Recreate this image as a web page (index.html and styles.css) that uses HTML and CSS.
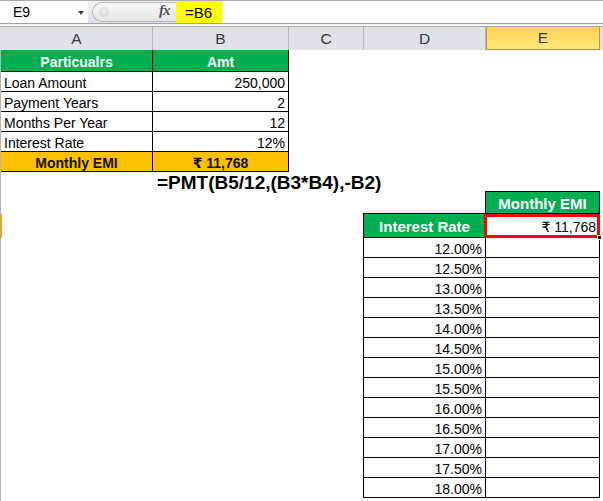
FILE: index.html
```html
<!DOCTYPE html>
<html>
<head>
<meta charset="utf-8">
<link rel="stylesheet" href="styles.css">
</head>
<body>
<div class="fbar">
  <div class="namebox">E9<span class="arrow"></span></div>
  <div class="fxzone">
    <div class="pill"><span class="knob"></span></div>
    <span class="fx">fx</span>
  </div>
  <div class="input"><span class="hl">=B6</span></div>
</div>
<div class="band"></div>
<div class="colhdr">
  <div class="h">A</div><div class="h">B</div><div class="h">C</div><div class="h">D</div><div class="h sel">E</div>
</div>
<div class="sheet">
  <span class="rowmark"></span>
  <div class="grid">
    <div class="c b green ctr">Particualrs</div><div class="c b green ctr">Amt</div><div class="c"></div><div class="c"></div><div class="c"></div>
    <div class="c b">Loan Amount</div><div class="c b r">250,000</div><div class="c"></div><div class="c"></div><div class="c"></div>
    <div class="c b">Payment Years</div><div class="c b r">2</div><div class="c"></div><div class="c"></div><div class="c"></div>
    <div class="c b">Months Per Year</div><div class="c b r">12</div><div class="c"></div><div class="c"></div><div class="c"></div>
    <div class="c b">Interest Rate</div><div class="c b r">12%</div><div class="c"></div><div class="c"></div><div class="c"></div>
    <div class="c b orange ctr">Monthly EMI</div><div class="c b orange ctr">₹ 11,768</div><div class="c"></div><div class="c"></div><div class="c"></div>
    <div class="c"></div><div class="c formula">=PMT(B5/12,(B3*B4),-B2)</div><div class="c"></div><div class="c"></div><div class="c"></div>
    <div class="c"></div><div class="c"></div><div class="c"></div><div class="c"></div><div class="c b green2 ctr lt">Monthly EMI</div>
    <div class="c"></div><div class="c"></div><div class="c"></div><div class="c b green2 ctr lt">Interest Rate</div><div class="c b r active">₹ 11,768<span class="handle"></span></div>
    <div class="c"></div><div class="c"></div><div class="c"></div><div class="c b r l">12.00%</div><div class="c b"></div>
    <div class="c"></div><div class="c"></div><div class="c"></div><div class="c b r l">12.50%</div><div class="c b"></div>
    <div class="c"></div><div class="c"></div><div class="c"></div><div class="c b r l">13.00%</div><div class="c b"></div>
    <div class="c"></div><div class="c"></div><div class="c"></div><div class="c b r l">13.50%</div><div class="c b"></div>
    <div class="c"></div><div class="c"></div><div class="c"></div><div class="c b r l">14.00%</div><div class="c b"></div>
    <div class="c"></div><div class="c"></div><div class="c"></div><div class="c b r l">14.50%</div><div class="c b"></div>
    <div class="c"></div><div class="c"></div><div class="c"></div><div class="c b r l">15.00%</div><div class="c b"></div>
    <div class="c"></div><div class="c"></div><div class="c"></div><div class="c b r l">15.50%</div><div class="c b"></div>
    <div class="c"></div><div class="c"></div><div class="c"></div><div class="c b r l">16.00%</div><div class="c b"></div>
    <div class="c"></div><div class="c"></div><div class="c"></div><div class="c b r l">16.50%</div><div class="c b"></div>
    <div class="c"></div><div class="c"></div><div class="c"></div><div class="c b r l">17.00%</div><div class="c b"></div>
    <div class="c"></div><div class="c"></div><div class="c"></div><div class="c b r l">17.50%</div><div class="c b"></div>
    <div class="c"></div><div class="c"></div><div class="c"></div><div class="c b r l">18.00%</div><div class="c b"></div>
  </div>
</div>
</body>
</html>
```
FILE: styles.css
```css
* { box-sizing: border-box; }
html, body { margin: 0; padding: 0; background: #fff; }
body {
  width: 603px; height: 501px; overflow: hidden;
  font-family: "Liberation Sans", "DejaVu Sans", sans-serif;
  font-size: 14px; color: #000;
}
.fbar {
  height: 24px; display: flex;
  border-top: 1px solid #a9abae; border-bottom: 1px solid #a0a3a7;
  background: #fff;
}
.namebox {
  width: 88px; padding-left: 13px; display: flex; align-items: center;
  font-size: 14px; position: relative;
}
.arrow {
  position: absolute; left: 78px; top: 10px;
  border-left: 3px solid transparent; border-right: 3px solid transparent;
  border-top: 4px solid #444;
}
.fxzone {
  width: 88px; display: flex; align-items: stretch;
  background: linear-gradient(#f2f3f5, #dde0e4);
  position: relative;
}
.pill {
  margin: 1px 0 1px 4px; flex: 1;
  border: 1px solid #b6bac0; border-right: none;
  border-radius: 11px 0 0 11px;
  background: linear-gradient(#f6f7f8, #e3e6e9);
  display: flex; align-items: center;
}
.knob {
  width: 10px; height: 10px; border-radius: 50%; margin-left: 6px;
  background: radial-gradient(circle at 50% 40%, #eceef0, #cfd2d6);
}
.fx {
  position: absolute; left: 71px; top: 1px;
  font-family: "Liberation Serif", serif; font-style: italic; font-weight: bold;
  font-size: 15px; color: #505458; letter-spacing: -1px;
}
.input { flex: 1; display: flex; }
.hl {
  width: 46px; background: #ffff00; padding-left: 9px;
  display: flex; align-items: center; font-size: 15px;
}
.band { height: 2px; background: #f7f7f7; }
.colhdr {
  height: 24px; display: grid;
  grid-template-columns: 152px 136px 75px 122px 114px 1fr;
  padding-left: 1px;
  background: #dfe3e8; border-top: 1px solid #a8abaf;
}
.h {
  border-right: 1px solid #b4b8bd; display: flex; align-items: center; justify-content: center;
  font-size: 15.5px; color: #34383d;
}
.h.sel {
  background: linear-gradient(#ffd052, #ffea7a);
  border: 1px solid #c4913a; border-top: none; color: #3a3530;
}
.sheet { position: relative; border-left: 1px solid #b3b6ba; height: 451px; }
.rowmark {
  position: absolute; left: -1px; top: 164px; width: 2px; height: 24px; background: #e1a23a;
}
.grid {
  display: grid;
  grid-template-columns: 152px 136px 75px 122px 114px;
  grid-template-rows: 22px repeat(6, 20px) 22px 24px repeat(13, 20px);
}
.c {
  display: flex; align-items: center; padding: 2px 3px 0 3px;
  white-space: nowrap; position: relative;
}
.b { border-right: 1px solid #000; border-bottom: 1px solid #000; }
.l { box-shadow: -1px 0 0 #000; }
.lt { box-shadow: -1px 0 0 #000, 0 -1px 0 #000, -1px -1px 0 #000; }
.r { justify-content: flex-end; }
.ctr { justify-content: center; }
.green { background: #00b050; color: #fff; font-weight: bold; font-size: 14px; }
.green2 { background: #00b050; color: #fff; font-weight: bold; font-size: 15px; }
.orange { background: #ffc000; color: #111; font-weight: bold; font-size: 14px; }
.formula {
  overflow: visible; font-weight: bold; font-size: 19px; padding-left: 4px; z-index: 1;
}
.active::after {
  content: ""; position: absolute; left: -2px; top: 0; right: -1px; bottom: -1px;
  border: 3px solid #ff0000;
}
.handle {
  position: absolute; right: -3px; bottom: -3px; width: 5px; height: 5px;
  background: #000; border: 1px solid #fff; z-index: 2;
}
```
